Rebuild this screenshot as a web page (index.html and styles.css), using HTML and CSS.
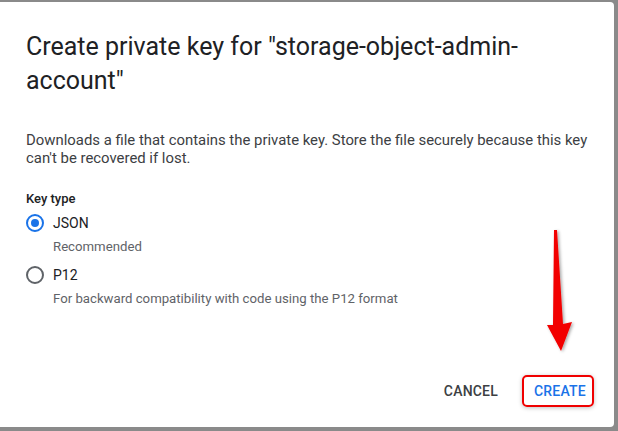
FILE: index.html
```html
<!DOCTYPE html>
<html>
<head>
<meta charset="utf-8">
<link rel="stylesheet" href="styles.css">
</head>
<body>
<div class="dialog">
  <h1 class="title">Create private key for "storage-object-admin-account"</h1>
  <p class="desc">Downloads a file that contains the private key. Store the file securely because this key can't be recovered if lost.</p>
  <div class="group">
    <div class="label">Key type</div>
    <div class="option">
      <span class="radio checked"></span>
      <span class="opt-text">JSON</span>
    </div>
    <div class="hint">Recommended</div>
    <div class="option option-next">
      <span class="radio"></span>
      <span class="opt-text">P12</span>
    </div>
    <div class="hint">For backward compatibility with code using the P12 format</div>
  </div>
  <div class="actions">
    <button class="btn cancel">CANCEL</button>
    <button class="btn create">CREATE</button>
  </div>
  <svg class="arrow" width="44" height="130" viewBox="0 0 44 130">
    <defs>
      <filter id="sh" x="-50%" y="-20%" width="200%" height="140%">
        <feDropShadow dx="1.5" dy="1" stdDeviation="1.5" flood-color="#000" flood-opacity="0.35"/>
      </filter>
    </defs>
    <path d="M13 2 L16 2 L22 96 L31 94 L20 123 L6 97 L12 97 Z" fill="#f20000" filter="url(#sh)"/>
  </svg>
</div>
</body>
</html>
```
FILE: styles.css
```css
html, body {
  margin: 0;
  padding: 0;
}
body {
  background: #8a8a8a;
  width: 618px;
  height: 431px;
  overflow: hidden;
  font-family: Roboto, "Liberation Sans", sans-serif;
}
.dialog {
  position: relative;
  margin-top: 2px;
  width: 614px;
  height: 425px;
  background: #fff;
  border-radius: 0 4px 4px 0;
  box-sizing: border-box;
  padding: 28px 26px 0 26px;
  display: flex;
  flex-direction: column;
}
.title {
  margin: 0;
  font-size: 25px;
  font-weight: 400;
  line-height: 34px;
  color: #202124;
  width: 560px;
}
.desc {
  margin: 33px 0 0 0;
  font-size: 14.9px;
  line-height: 18px;
  color: #3c4043;
  width: 574px;
}
.group {
  margin-top: 24px;
}
.label {
  font-size: 13px;
  font-weight: 500;
  color: #202124;
  line-height: 16px;
}
.option {
  display: flex;
  align-items: center;
  height: 20px;
  margin-top: 6px;
}
.option-next {
  margin-top: 10px;
}
.radio {
  width: 14px;
  height: 14px;
  border: 2px solid #5f6368;
  border-radius: 50%;
  box-sizing: content-box;
  position: relative;
  flex: none;
}
.radio.checked {
  border-color: #1a73e8;
}
.radio.checked::after {
  content: "";
  position: absolute;
  left: 3px;
  top: 3px;
  width: 8px;
  height: 8px;
  border-radius: 50%;
  background: #1a73e8;
}
.opt-text {
  margin-left: 9px;
  font-size: 14px;
  color: #202124;
}
.hint {
  margin-left: 27px;
  margin-top: 6px;
  font-size: 13.2px;
  line-height: 16px;
  color: #5f6368;
}
.actions {
  margin-top: auto;
  margin-bottom: 20px;
  display: flex;
  justify-content: flex-end;
  align-items: center;
  gap: 14px;
  margin-right: -6px;
}
.btn {
  background: none;
  border: 0;
  font-family: Roboto, "Liberation Sans", sans-serif;
  font-size: 14px;
  font-weight: 500;
  letter-spacing: 0.2px;
  padding: 0 10px;
  height: 32px;
  cursor: pointer;
}
.cancel {
  color: #3c4043;
}
.create {
  color: #1a73e8;
  border: 2px solid #f00000;
  border-radius: 5px;
  box-shadow: 0 1px 4px rgba(0,0,0,0.25);
  width: 72px;
}
.arrow {
  position: absolute;
  left: 541px;
  top: 226px;
}
```
